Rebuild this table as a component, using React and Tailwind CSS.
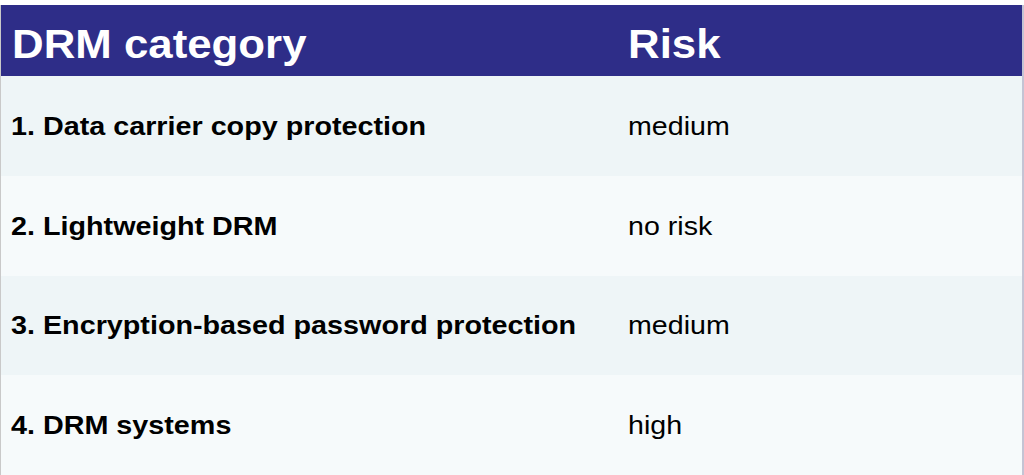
export default function App() {
  const rows = [
    ["1. Data carrier copy protection", "medium", "bg-[#eef5f7]"],
    ["2. Lightweight DRM", "no risk", "bg-[#f6fafb]"],
    ["3. Encryption-based password protection", "medium", "bg-[#eef5f7]"],
    ["4. DRM systems", "high", "bg-[#f6fafb]"],
  ];
  const heights = ["h-[100px]", "h-[100px]", "h-[99px]", "h-[100px]"];
  return (
    <div className="w-[1024px] h-[475px] bg-white pt-[5px] overflow-hidden" style={{ fontFamily: '"Liberation Sans", Arial, sans-serif' }}>
      <div className="border-l border-l-[#c9c9c9] border-r-2 border-r-[#c4c4d4] w-[1024px]">
        <div className="grid grid-cols-[615px_1fr] h-[71px] bg-[#2e2d88] text-white font-bold text-[40px] items-center">
          <div className="pl-[11px] pt-[6px]"><span className="inline-block origin-left scale-x-[1.095] whitespace-nowrap">DRM category</span></div>
          <div className="pl-[12px] pt-[6px]"><span className="inline-block origin-left scale-x-[1.095] whitespace-nowrap">Risk</span></div>
        </div>
        {rows.map((r, i) => (
          <div key={i} className={`grid grid-cols-[615px_1fr] items-center ${heights[i]} ${r[2]} text-black text-[26px]`}>
            <div className="pl-[10px] font-bold"><span className="inline-block origin-left scale-x-[1.105] whitespace-nowrap">{r[0]}</span></div>
            <div className="pl-[12px]"><span className="inline-block origin-left scale-x-[1.1] whitespace-nowrap">{r[1]}</span></div>
          </div>
        ))}
      </div>
    </div>
  );
}
